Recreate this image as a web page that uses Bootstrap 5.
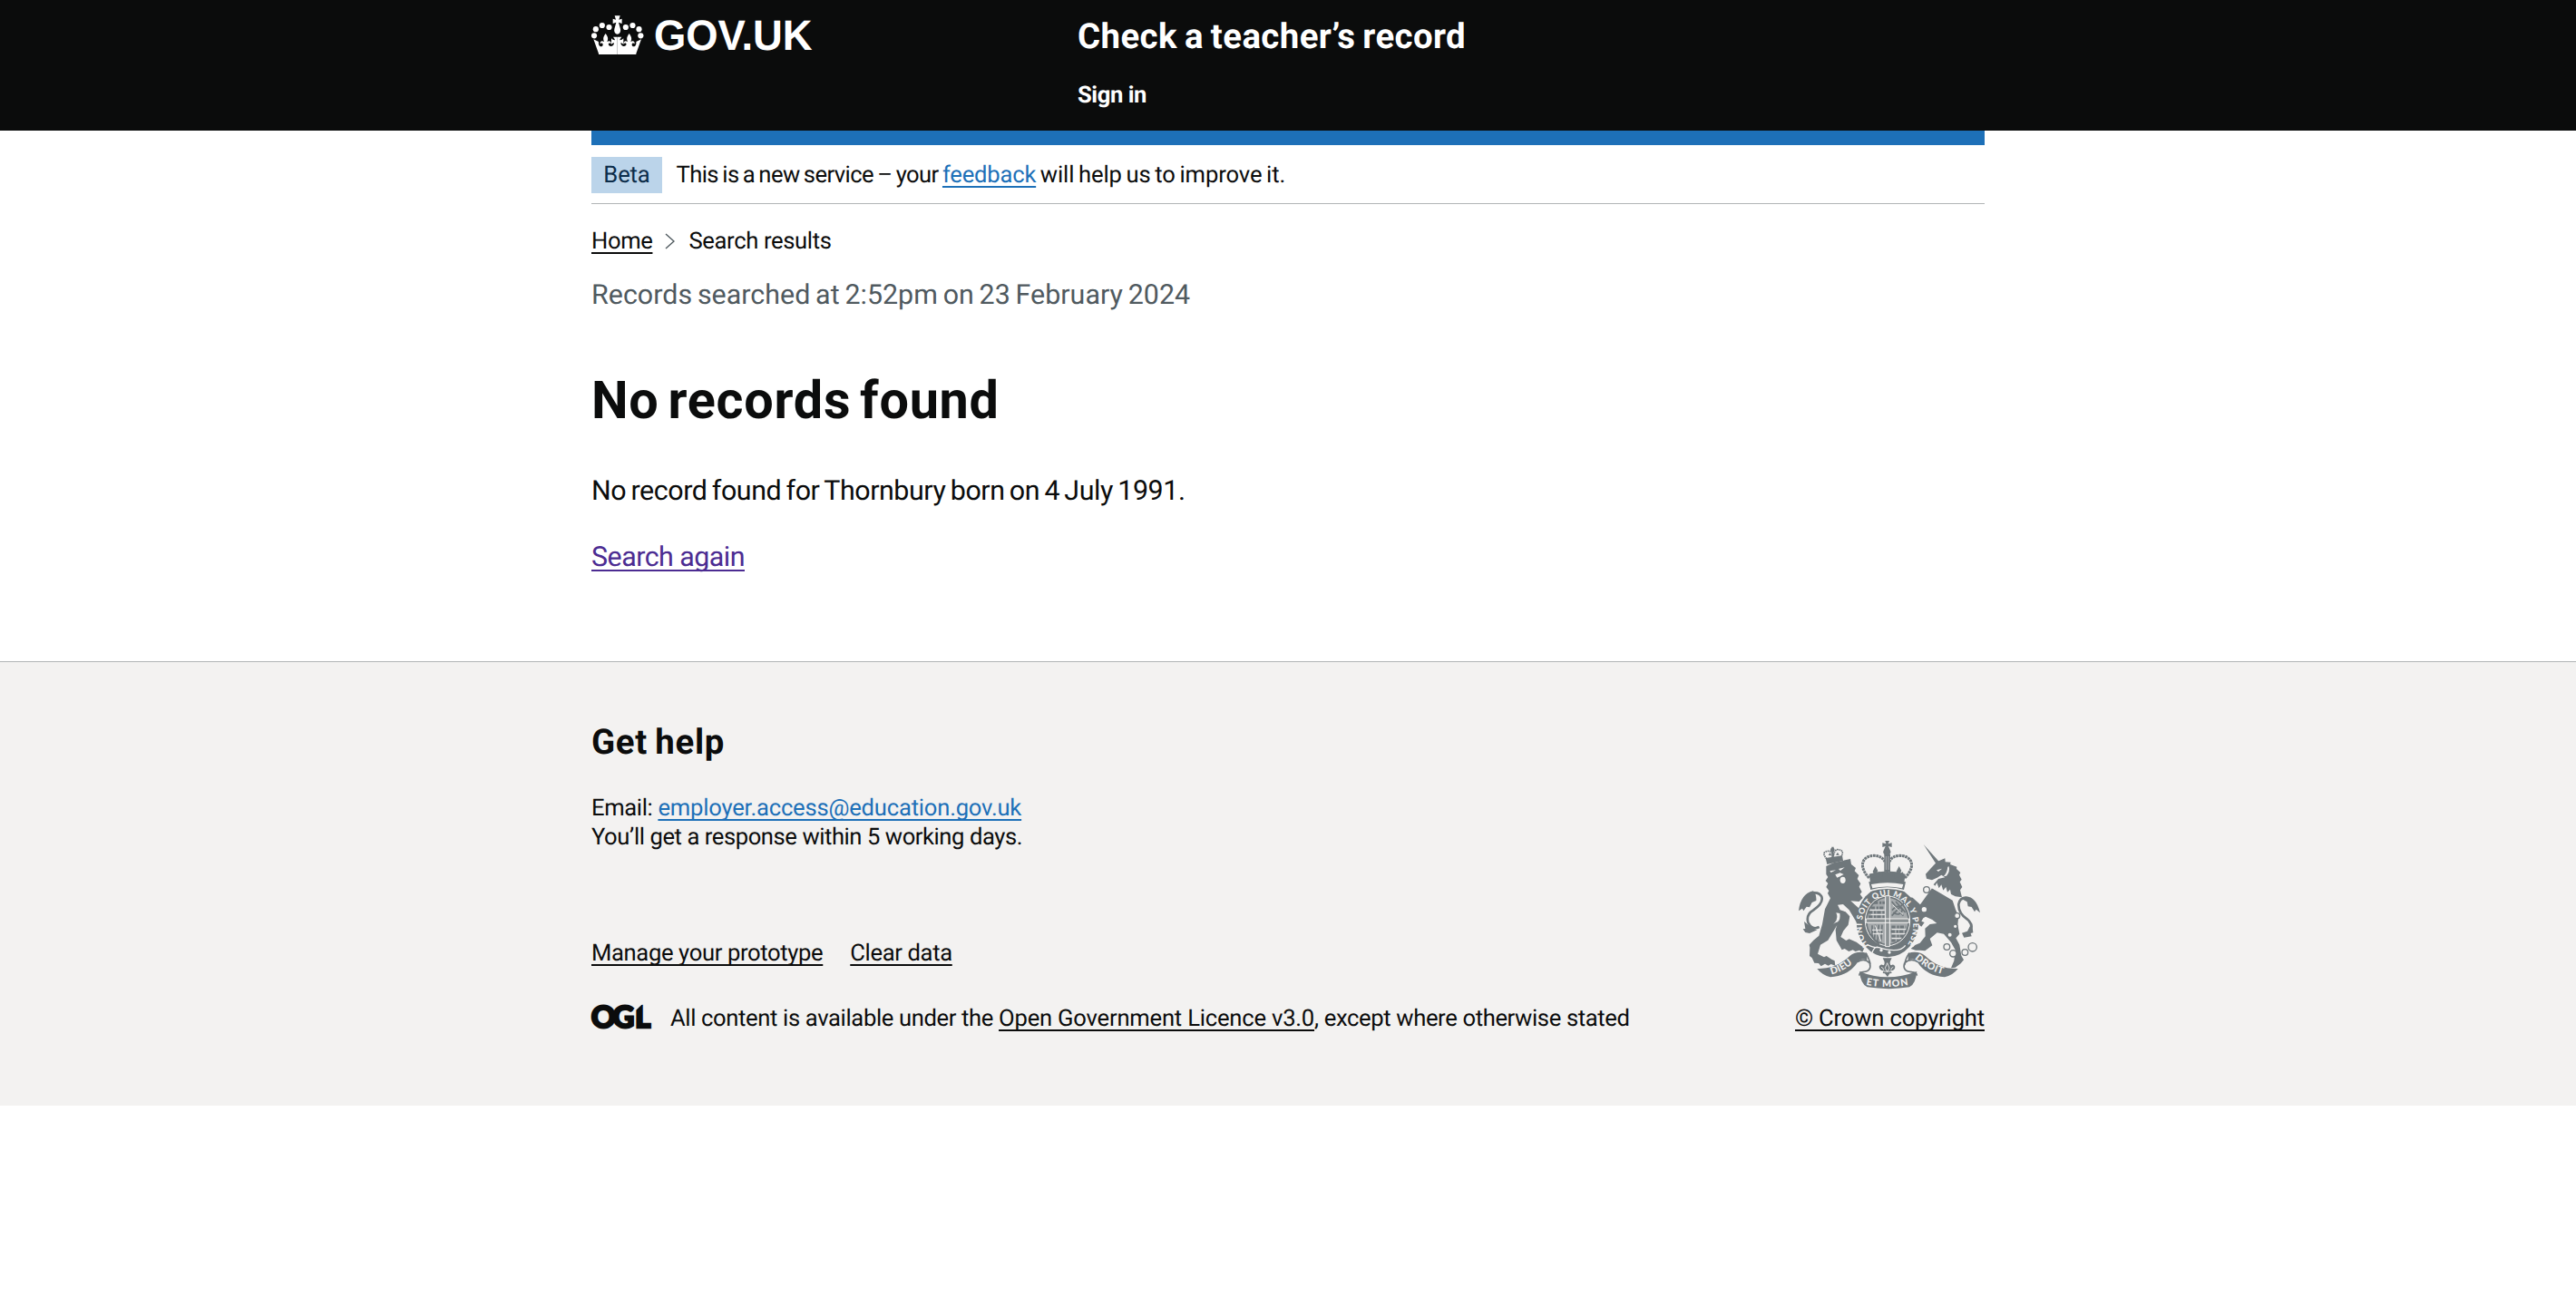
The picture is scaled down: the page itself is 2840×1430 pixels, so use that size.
<!DOCTYPE html>
<html lang="en">
<head>
<meta charset="utf-8">
<title>No records found – Check a teacher’s record</title>
<meta name="viewport" content="width=device-width, initial-scale=1">
<link rel="stylesheet" href="https://cdn.jsdelivr.net/npm/bootstrap@5.3.0/dist/css/bootstrap.min.css">
<style>
body{font-family:Roboto,"Liberation Sans",Arial,sans-serif;font-size:25.6px;line-height:32px;color:#0b0c0c;letter-spacing:-.014em;text-rendering:geometricPrecision}
.page-width{width:1536px;margin:0 auto}
.site-header{background:#0b0c0c;color:#fff;height:144px}
.logo-col{width:536px;padding-top:16px}
.logo-col svg{display:block}
.service-name{font-size:38.4px;line-height:48px;letter-spacing:.0105em;word-spacing:-.05em;color:#fff;padding-top:1px;margin-bottom:24px}
.sign-in{color:#fff;letter-spacing:-.0166em}
.blue-bar{height:16px;background:#1d70b8}
a{text-decoration:underline;text-decoration-thickness:2px;text-underline-offset:4px;text-decoration-skip-ink:none;color:#1d70b8}
a.plain-dark{color:#0b0c0c}
a.been-there{color:#4c2c92}
a.bare{text-decoration:none}
.phase{padding:13px 0 11px;border-bottom:1px solid #b1b4b6}
.phase-tag{background:#bbd4ea;color:#0c2d4a;width:78px;text-align:center;line-height:40px;letter-spacing:-.005em}
.phase-text{margin-left:15.5px;white-space:pre}
.ls-a{letter-spacing:-.0225em;word-spacing:-.06em}.ls-b{letter-spacing:-.008em}.ls-c{letter-spacing:-.0045em;word-spacing:-.06em}
.crumbs{margin-top:25px}
.crumbs svg{margin:0 15px 0 14px}
.stamp{margin-top:24px;color:#505a5f;font-size:30.4px;line-height:40px;letter-spacing:.001em;word-spacing:-.06em}
.page-title{margin:65px 0 0;font-size:57.6px;line-height:64px;font-weight:700;letter-spacing:.0125em;word-spacing:-.09em}
.result{margin:47px 0 0;font-size:30.4px;line-height:40px;letter-spacing:-.0138em;word-spacing:-.06em}
.again{margin:33px 0 94px;font-size:30.4px;line-height:40px;letter-spacing:-.017em}
.site-footer{background:#f3f2f1;border-top:1px solid #b1b4b6;padding:65px 0 80px}
.help-title{font-size:38.4px;line-height:48px;font-weight:700;letter-spacing:.018em;word-spacing:-.05em;margin-bottom:32px}
.help-note{letter-spacing:-.017em}
.meta-links{gap:30px;margin-bottom:40px}
.lower{margin-top:-12px}
.ogl{width:66px;height:28px;margin-right:21px;overflow:visible}
.crest{display:block;margin:0 auto 16px}
.copyright{letter-spacing:-.0067em}
</style>
<script src="https://cdn.jsdelivr.net/npm/bootstrap@5.3.0/dist/js/bootstrap.bundle.min.js"></script>
</head>
<body>
<header class="site-header">
  <div class="page-width d-flex">
    <div class="logo-col">
      <svg width="260" height="44" viewBox="36 48 780 132" fill="#fff" role="img" aria-label="GOV.UK">
        <g id="pearls"><circle cx="45" cy="118" r="9.3"/><circle cx="50.500" cy="96.500" r="9.300"/><circle cx="71.500" cy="84" r="9.300"/><circle cx="94.500" cy="90" r="9.300"/></g>
        <use href="#pearls" transform="translate(244 0) scale(-1 1)"/>
        <path d="M113 52h18l-4 13 10-3v16l-11-4 6 22a10.500 13 0 1 1-20 0l6-22-11 4V62l10 3z"/>
        <path id="halfcrown" d="M60 177L43 130l17 8c-1 8 1 14 6 16 7 1 10-5 7-10-3-3-6-1-8 1-1-8 5-12 13-7-5-10-2-18 5-27 7 9 10 17 5 27 8-5 14-1 13 7-2-2-5-4-8-1-2 6 3 10 9 9 6-1 9-6 9-11-4 0-7 3-9 5v-20c3 4 7 6 12 6-1-5-3-7-6-11h14v59q-34-2-62 5z"/>
        <use href="#halfcrown" transform="translate(244 0) scale(-1 1)"/>
        <text x="243" y="166" font-family="Liberation Sans, Arial, sans-serif" font-weight="700" font-size="141" textLength="523" lengthAdjust="spacingAndGlyphs">GOV.UK</text>
      </svg>
    </div>
    <div class="pt-3">
      <div class="service-name fw-bold">Check a teacher’s record</div>
      <a class="sign-in bare fw-bold d-block" href="#">Sign in</a>
    </div>
  </div>
</header>
<div class="page-width">
  <div class="blue-bar"></div>
  <div class="phase d-flex align-items-baseline">
    <span class="phase-tag">Beta</span>
    <span class="phase-text"><span class="ls-a">This is a new service – your </span><a class="ls-b" href="#">feedback</a><span class="ls-c"> will help us to improve it.</span></span>
  </div>
  <nav class="crumbs d-flex align-items-center" aria-label="Breadcrumb">
    <a class="plain-dark" href="#">Home</a>
    <svg width="11" height="18" viewBox="0 0 11 18" fill="none" stroke="#505a5f" stroke-width="1.400"><path d="M1 1l9 8-9 8"/></svg>
    <span>Search results</span>
  </nav>
  <main>
    <div class="stamp">Records searched at 2:52pm on 23 February 2024</div>
    <h1 class="page-title">No records found</h1>
    <p class="result">No record found for Thornbury born on 4 July 1991.</p>
    <p class="again"><a class="been-there" href="#">Search again</a></p>
  </main>
</div>
<footer class="site-footer">
  <div class="page-width">
    <h2 class="help-title">Get help</h2>
    <div>Email: <a class="ls-b" href="#">employer.access@education.gov.uk</a></div>
    <div class="help-note">You’ll get a response within 5 working days.</div>
    <div class="lower d-flex justify-content-between align-items-end">
      <div>
        <div class="meta-links d-flex"><a class="plain-dark" href="#">Manage your prototype</a><a class="plain-dark" href="#">Clear data</a></div>
        <div class="d-flex align-items-start">
          <svg class="ogl" viewBox="0 0 198 84" role="img" aria-label="OGL"><text x="-1 70 144" y="77" font-family="Lato, sans-serif" font-weight="900" font-size="100" fill="#0b0c0c" stroke="#0b0c0c" stroke-width="7">OGL</text><path d="M144 -6h31L150 18l-6 4z" fill="#f3f2f1"/></svg>
          <span>All content is available under the <a class="plain-dark ls-b" href="#">Open Government Licence v3.0</a>, except where otherwise stated</span>
        </div>
      </div>
      <div>
        <svg class="crest" width="200" height="164" viewBox="69 50 600 492" fill="#6f777b" role="img" aria-label="Royal coat of arms">
          <defs>
            <path id="garter" d="M300 397A85 99 0 1 1 426 397"/>
            <path id="rib1" d="M178 492Q222 482 264 440"/>
            <path id="rib2" d="M292 526Q363 540 436 526"/>
            <path id="rib3" d="M452 440Q500 482 556 494"/>
          </defs>
          <!-- lion -->
          <path d="M160 134L184 123 240 110l3 18 15 12-4 10 14 14-5 12 11 16-5 10 9 17-6 8 9 12-12 12-28-2 25 22 18 30 1 37-22-14-27-45-20-19-18 2 8 17 18 6 14 15-5 28-16 20-9 20 18 12 10-5 24 10 10 8 16 12-6 13-10-6-13 4-9-5-13 5-14-9-9 4-18-32-3-35 5-15-30 50-25 15-9 30 21 11 8-4 17 11 10 5 2 16-14-5-9 5-11-6-13 8-8-10-14-1-8-17-8-6 1-28-2-9 14-15 18-15 11-38 9-50 18-36-9-16 4-9-9-12 6-12-8-9 8-12-6-9z"/>
          <g fill="#f3f2f1"><ellipse cx="215" cy="180" rx="9" ry="11"/><path d="M172 150l20-3-16 8zM201 143l20-5-14 11zM190 162l16-6 12 5-12 7-10 4zM205 290q4 28-14 31l-7 4q18-15 9-37z"/></g>
          <path d="M158 107l55-8 3 17-53 12z"/>
          <g fill="none" stroke="#6f777b" stroke-width="5" stroke-dasharray="5 2"><path d="M162 110q-21-24 6-26 12 0 16 18M209 105q14-26-12-26-10 2-13 22"/></g><circle cx="181" cy="80" r="7"/><path d="M178 70h7v36h-7zM167 98l6-9 5 10zM192 97l6-9 5 10z"/>
          <path d="M137 335q-24 12-37-15-7-26 17-40 35-24 28-45-8-17-34-12" fill="none" stroke="#6f777b" stroke-width="8"/>
          <path d="M117 216q-42 10-48 66l12-8 4 8 10-14 10 2 8-16 14-6q2-20-10-32zM87 317l4 24-8 1 8 11 14 3 25-11-16-6z"/>
          <!-- unicorn -->
          <path d="M482 62l54 60-10 8z"/>
          <path d="M553 108l1 12 18 1-2 7 22 8-1 7 13 12-4 8 8 15-6 8 8 17-7 10 6 24-22-3-60-30-12-9 16-19 22-5-12-8-14 9-17 8-18-5-3-15 16-18 22-23z"/>
          <path d="M510 207l68 40 10 30 10 23-3 28 6 30-12 14 12 22 6 36 8 14-10 12-18 13-14 2 10-24 4-36-14-25-24-28-22-4-24 20 8 22-24 18-18-2-13 0-16-5 14-12 16-7 18-22-1-26 16-14 23-3-15-12-22-10-8 5-6 10 10 4-10 14-18-14-9-6-14-13-3-16 9 2 13 8 4-7-10-26-16-9-14 2-1-11 18-8 12 2 25 23z"/>
          <g fill="#f3f2f1"><path d="M525 147l18-5-12 10zM562 136q-2 22-15 32l11-2q12-13 8-31z"/><path d="M512 199l70 39-2 5-72-37z"/><path d="M520 200l6-11 7 18 8-12 6 19 9-11 5 17 9-9 3 17-8 6-50-27z"/></g>
          <g fill="#f3f2f1" stroke="#6f777b" stroke-width="4"><circle cx="492" cy="212" r="10"/><circle cx="484" cy="277" r="10"/><circle cx="593" cy="298" r="9"/><circle cx="569" cy="361" r="8"/><circle cx="587" cy="333" r="7"/><circle cx="559" cy="401" r="10"/><circle cx="580" cy="423" r="11"/><circle cx="619" cy="419" r="10"/><circle cx="644" cy="402" r="14"/></g>
          <path d="M634 350q16-20-8-41-29-20-28-49 4-25 30-21" fill="none" stroke="#6f777b" stroke-width="8"/>
          <path d="M612 236q42-9 57 52l-13-11-5 8-10-16-12-2-3-15-17-9zM642 320l4 34-8 2 3 10-25 4-7-15 18-6z"/>
          <!-- shield and garter -->
          <ellipse cx="363" cy="317" rx="103" ry="118"/>
          <ellipse cx="363" cy="315" rx="74" ry="82" fill="none" stroke="#f3f2f1" stroke-width="3"/>
          <ellipse cx="363" cy="315" rx="67" ry="76" fill="#a7abad"/>
          <g fill="none" stroke="#6f777b" stroke-width="9" stroke-dasharray="13 5 7 3"><path d="M308 272h46M300 287h54M318 255h36M300 301h54M376 335h48M374 350h49M376 365h39M376 380h24"/></g>
          <g fill="none" stroke="#6f777b" stroke-width="5"><path d="M377 251l38 47M390 251l32 36M377 298l40-42M378 280q22-25 34-1q-10 23-30 8M312 330v32q3 20 24 29M323 328l-3 46M334 328l-4 56M345 328l-4 60" /></g>
          <g fill="none" stroke="#f3f2f1" stroke-width="3"><path d="M304 279h49M308 294h46M377 343h46M377 358h44M377 373h32M380 262l34 32M322 330l20 54M312 345h34M314 358h34"/></g>
          <path d="M356 232h14v168h-14zM292 308h142v13H292z" fill="#8a9092" stroke="#f3f2f1" stroke-width="3"/>
          <text font-family="Lato, sans-serif" font-weight="900" font-size="27" fill="#f3f2f1"><textPath href="#garter" textLength="425" lengthAdjust="spacing">HONI SOIT QUI MAL Y PENSE</textPath></text>
          <path d="M296 394q26 12 36 8 70 22 90-6M312 420q8-22 20-18" fill="none" stroke="#f3f2f1" stroke-width="4"/><circle cx="342" cy="412" r="5" fill="#f3f2f1"/><circle cx="369" cy="419" r="5" fill="#f3f2f1"/>
          <!-- royal crown -->
          <path d="M298 184q63-18 128 0l-7 31q-56-17-114 0z" stroke="#f3f2f1" stroke-width="5"/>
          <path d="M309 194q54-11 106 0l-4 13q-49-11-98 0z" fill="#f3f2f1"/>
          <path d="M302 160q61-19 120 0l-4 27q-56-13-112 0z"/>
          <g fill="none" stroke="#6f777b" stroke-width="9" stroke-dasharray="8 2"><path d="M302 173C263 132 282 99 318 99q27 1 36 20M420 173c41-41 21-74-16-74q-27 1-34 20"/></g>
          <path d="M352 94h20v76h-20z"/><path d="M358 101v56M366 101v56" stroke="#c5c7c8" stroke-width="2"/>
          <path d="M355 50h14l-4 10 12-3v14l-11-3 5 12a12 12 0 1 1-20 0l5-12-10 3V57l12 3z"/>
          <g id="fleur"><path d="M323 134l8 15-4 8 9-4 3 13-31 8-2-15 12 1-4-9z"/></g><use href="#fleur" x="78"/><path d="M353 146h18l-5 9 14-3v18h-34v-18l12 3z"/>
          <!-- motto ribbon -->
          <path d="M130 473q62 3 108-42 24-19 57-9v23q-20-9-31 7-30 45-90 49-28-7-44-28zM596 473q-62 3-108-42-24-19-57-9v23q20-9 31 7 30 45 90 49 28-7 44-28z"/>
          <path d="M270 482q91 38 190 0-4 43-25 52-66 11-139 0-22-10-26-52z"/>
          <g fill="none" stroke="#6f777b" stroke-width="5"><path d="M264 451q22-15 40 4 8 26-22 29-14 2-12 12M291 421q13 22 15 39M463 451q-24-16-44 4-8 26 22 29 20 2 19 12M435 421q-15 22-15 39"/></g>
          <g font-family="Lato, sans-serif" font-weight="900" font-size="32" fill="#f3f2f1"><text><textPath href="#rib1" textLength="78">DIEU</textPath></text><text><textPath href="#rib2" textLength="140">ET MON</textPath></text><text><textPath href="#rib3" textLength="106">DROIT</textPath></text></g>
          <path d="M347 438h30l-5 10q-3 10 3 14 8-6 13 4 0 13-14 14l3 8-7 1-7 11-9-11-7-1 3-8q-14-1-15-14 6-11 14-4 6-4 3-14z"/><path d="M362 454l7 17-7 13-7-13zM342 468q7 1 8 10M382 468q-7 1-8 10M350 482h25" fill="none" stroke="#f3f2f1" stroke-width="2.500"/>
        </svg>
        <a class="plain-dark copyright" href="#">© Crown copyright</a>
      </div>
    </div>
  </div>
</footer>
</body>
</html>
